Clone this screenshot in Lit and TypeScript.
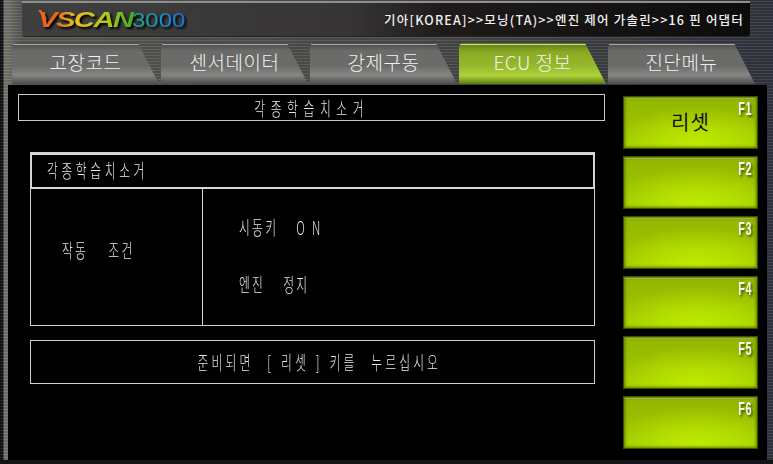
import { LitElement, html, css } from "lit";
import { customElement } from "lit/decorators.js";

@customElement("app-root")
export class AppRoot extends LitElement {
  static styles = css`
    :host {
      display: block;
      width: 773px;
      height: 464px;
      overflow: hidden;
      font-family: "Noto Sans CJK KR", "DejaVu Sans", sans-serif;
    }
    .page {
      width: 773px;
      height: 464px;
      box-sizing: border-box;
      display: flex;
      flex-direction: column;
      background:
        linear-gradient(0deg, #141414 0 4px, transparent 4px),
        repeating-linear-gradient(0deg, rgba(255,255,255,.07) 0 1px, rgba(0,0,0,.1) 1px 3px),
        linear-gradient(90deg, #141416 0 3px, #77776e 4px 8px, #5c5c58 20px, #4a4a4a 60%, #333640 100%);
    }
    .top {
      height: 33px;
      margin: 3px 23px 0 22px;
      flex: none;
      display: flex;
      align-items: center;
      justify-content: space-between;
      box-sizing: border-box;
      padding: 0 6px 0 16px;
      border-radius: 0 0 3px 3px;
      background: linear-gradient(90deg, #403f3f 0, #363434 45%, #1e1a1a 58%, #0d0c0c 100%);
      box-shadow: 0 1px 0 #222, 0 -2px 0 #8f8f8f;
    }
    .logo {
      position: relative;
      display: flex;
      align-items: center;
      height: 24px;
      filter: drop-shadow(2px 2px 1px #000);
    }
    .swoosh {
      position: absolute;
      left: 0;
      top: 2px;
    }
    .vscan {
      font: italic 700 22px "Liberation Sans", sans-serif;
      letter-spacing: -1.2px;
      transform: scaleX(1.33);
      transform-origin: left center;
      width: 94px;
      background: linear-gradient(90deg, #e8671c 0 14%, #e9c11a 30%, #b4c81a 55%, #1fa326 82%, #0e8e3e);
      -webkit-background-clip: text;
      background-clip: text;
      color: transparent;
    }
    .n3000 {
      font: 400 21px "Liberation Sans", sans-serif;
      transform: scaleX(1.14);
      transform-origin: left center;
      background: linear-gradient(90deg, #1fa77a, #1c8fd0 60%, #1a6fd8);
      -webkit-background-clip: text;
      background-clip: text;
      color: transparent;
    }
    .crumb {
      color: #f0f0f0;
      font-size: 12.5px;
      font-weight: 500;
      letter-spacing: 1.2px;
      white-space: nowrap;
    }
    .tabs {
      flex: none;
      height: 42px;
      margin: 7px 0 0 12px;
      display: flex;
      gap: 2px;
    }
    .tab {
      width: 147px;
      height: 41px;
      box-sizing: border-box;
      padding-bottom: 4px;
      display: flex;
      align-items: center;
      justify-content: center;
      color: #f2f2f2;
      font-size: 19px;
      font-weight: 300;
      letter-spacing: .5px;
      clip-path: path("M0 41 V5 Q0 0 5 0 H126 L147 41 Z");
      background:
        linear-gradient(180deg, transparent 0 1px, #a9a9a3 1px 2px, transparent 2px),
        linear-gradient(180deg, #4a4a48 0, #6b6b69 20%, #6a6a68 55%, #858583 78%, #4c4c4a 100%);
    }
    .tab.on {
      background:
        linear-gradient(180deg, transparent 0 1px, #c6d98c 1px 2px, transparent 2px),
        linear-gradient(180deg, #5e7a14 0, #8aaa24 22%, #96b82c 55%, #aed23a 80%, #5b7a10 100%);
    }
    .panel {
      flex: none;
      width: 759px;
      height: 375px;
      background: #000;
      margin-left: 8px;
      display: flex;
      box-sizing: border-box;
      padding: 9px 9px 0 10px;
      gap: 18px;
    }
    .left {
      width: 587px;
      display: flex;
      flex-direction: column;
      align-items: flex-start;
      color: #e6e6e6;
    }
    .line {
      display: inline-block;
      transform: scaleX(.62);
      font-size: 19px;
      font-weight: 300;
      letter-spacing: 3.6px;
      white-space: pre;
      line-height: 22px;
    }
    .start {
      transform-origin: left center;
    }
    .title {
      width: 587px;
      height: 27px;
      box-sizing: border-box;
      border: 1px solid #c9c9c9;
      display: flex;
      align-items: center;
      justify-content: center;
      padding-left: 1px;
    }
    .title .line {
      letter-spacing: 9px;
    }
    .box {
      width: 565px;
      height: 174px;
      margin: 31px 0 0 12px;
      box-sizing: border-box;
      border: 1px solid #d0d0d0;
      display: flex;
      flex-direction: column;
    }
    .head {
      height: 36px;
      flex: none;
      box-sizing: border-box;
      border: 1px solid #d8d8d8;
      border-bottom-width: 2px;
      border-top-width: 2px;
      display: flex;
      align-items: center;
      padding: 0 0 3px 15px;
    }
    .head .line {
      letter-spacing: 5.8px;
    }
    .body {
      flex: 1;
      display: flex;
    }
    .cond {
      width: 172px;
      flex: none;
      border-right: 1px solid #d8d8d8;
      display: flex;
      align-items: center;
      box-sizing: border-box;
      padding: 0 0 14px 31px;
    }
    .cond .line {
      word-spacing: 8.5px;
    }
    .vals {
      flex: 1;
      display: flex;
      flex-direction: column;
      gap: 35px;
      padding: 27px 0 0 36px;
      align-items: flex-start;
    }
    .vals .line {
      word-spacing: 6.8px;
    }
    .vals .tight {
      word-spacing: 0;
    }
    .msg {
      width: 565px;
      height: 44px;
      margin: 14px 0 0 12px;
      box-sizing: border-box;
      border: 1px solid #d0d0d0;
      display: flex;
      align-items: center;
      justify-content: center;
      padding-left: 13px;
    }
    .msg .line {
      letter-spacing: 5px;
      word-spacing: 2px;
    }
    .keys {
      width: 135px;
      display: flex;
      flex-direction: column;
      gap: 7px;
      padding-top: 2px;
    }
    .key {
      position: relative;
      height: 53px;
      box-sizing: border-box;
      display: flex;
      align-items: center;
      justify-content: center;
      padding-bottom: 3px;
      color: #111;
      font-size: 20px;
      letter-spacing: 1px;
      background:
        linear-gradient(180deg, transparent 0 2px, #c2d57a 2px 3px, transparent 3px),
        radial-gradient(ellipse 70% 80% at 55% 100%, #c2ee00 0, #b4de00 45%, rgba(160,198,0,0) 100%),
        linear-gradient(180deg, #93b600, #a2c800);
      box-shadow: inset 0 0 0 1px #3d5200, inset 0 0 3px 2px #5f7a00;
    }
    .fn {
      position: absolute;
      top: 3px;
      right: 6px;
      color: #f6f6f6;
      font: 700 18px "Liberation Sans", sans-serif;
      transform: scaleX(.6);
      transform-origin: right top;
      text-shadow: 3px 2px 3px rgba(50,70,0,.8);
    }
  `;

  render() {
    const tabs = ["고장코드", "센서데이터", "강제구동", "ECU 정보", "진단메뉴"];
    return html`
      <div class="page">
        <div class="top">
          <div class="logo">
            <svg class="swoosh" width="12" height="10" viewBox="0 0 12 10"><path d="M0 0 L3 0 L9 9 L6 9 Z" fill="#e8671c"/></svg>
            <span class="vscan">VSCAN</span><span class="n3000">3000</span>
          </div>
          <div class="crumb">기아[KOREA]>>모닝(TA)>>엔진 제어 가솔린>>16 핀 어댑터</div>
        </div>
        <div class="tabs">
          ${tabs.map((t, i) => html`<div class="tab ${i === 3 ? "on" : ""}">${t}</div>`)}
        </div>
        <div class="panel">
          <div class="left">
            <div class="title"><span class="line">각종학습치소거</span></div>
            <div class="box">
              <div class="head"><span class="line start">각종학습치소거</span></div>
              <div class="body">
                <div class="cond"><span class="line start">작동  조건</span></div>
                <div class="vals">
                  <span class="line start">시동키  <span class="tight">O N</span></span>
                  <span class="line start">엔진  정지</span>
                </div>
              </div>
            </div>
            <div class="msg"><span class="line">준비되면  [ 리셋 ] 키를  누르십시오</span></div>
          </div>
          <div class="keys">
            ${[1, 2, 3, 4, 5, 6].map(
              (n) => html`<div class="key"><span class="fn">F${n}</span>${n === 1 ? "리셋" : ""}</div>`
            )}
          </div>
        </div>
      </div>
    `;
  }
}
